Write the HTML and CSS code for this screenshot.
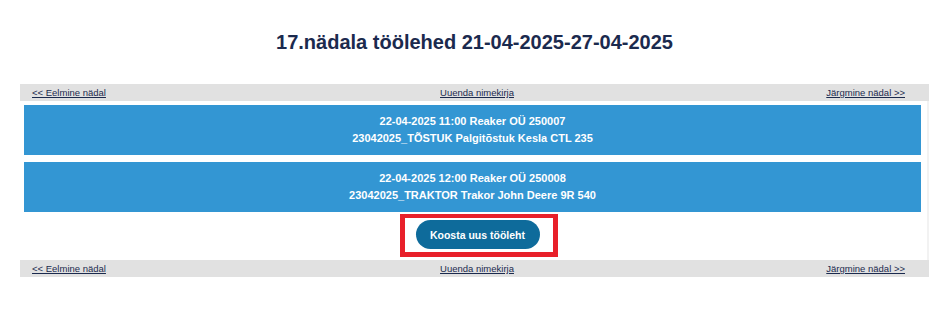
FILE: index.html
```html
<!DOCTYPE html>
<html lang="et">
<head>
    <meta charset="UTF-8">
    <meta name="viewport" content="width=device-width, initial-scale=1.0">
    <title>Töölehed</title>
    <link rel="stylesheet" href="styles.css">
</head>
<body>
    <h1>17.nädala töölehed 21-04-2025-27-04-2025</h1>

    <div class="container">
        <div class="nav-bar">
            <a href="#" class="prev">&lt;&lt; Eelmine nädal</a>
            <a href="#">Uuenda nimekirja</a>
            <a href="#" class="next">Järgmine nädal &gt;&gt;</a>
        </div>

        <div class="sheets">
            <div class="sheet">
                <div>22-04-2025 11:00 Reaker OÜ 250007</div>
                <div>23042025_TÕSTUK Palgitõstuk Kesla CTL 235</div>
            </div>
            <div class="sheet">
                <div>22-04-2025 12:00 Reaker OÜ 250008</div>
                <div>23042025_TRAKTOR Trakor John Deere 9R 540</div>
            </div>

            <div class="button-container">
                <div class="highlight">
                    <button>Koosta uus tööleht</button>
                </div>
            </div>
        </div>

        <div class="nav-bar">
            <a href="#" class="prev">&lt;&lt; Eelmine nädal</a>
            <a href="#">Uuenda nimekirja</a>
            <a href="#" class="next">Järgmine nädal &gt;&gt;</a>
        </div>
    </div>
</body>
</html>
```

FILE: styles.css
```css
:root {
    --blue: #3396d3;
    --button: #0e6b9b;
    --navy: #1b2a4e;
    --bar: #e1e1e1;
}

* {
    box-sizing: border-box;
    margin: 0;
    padding: 0;
}

body {
    font-family: 'Liberation Sans', Arial, sans-serif;
    background: #fff;
    color: var(--navy);
    padding: 0 12px 0 20px;
}

h1 {
    font-size: 20px;
    font-weight: bold;
    text-align: center;
    color: var(--navy);
    padding-top: 30px;
    line-height: 24px;
    margin-bottom: 30px;
}

.container {
    width: 909px;
}

.nav-bar {
    display: grid;
    grid-template-columns: 1fr auto 1fr;
    align-items: center;
    background: var(--bar);
    height: 17px;
    padding: 0 7px 0 12px;
    font-size: 9.5px;
}

.nav-bar a {
    color: var(--navy);
    text-decoration: underline;
}

.nav-bar .prev {
    justify-self: start;
}

.nav-bar .next {
    justify-self: end;
    margin-right: 17px;
}

.sheets {
    padding: 4px 6px 3px 4px;
    border-right: 2px solid #f2f2f2;
    display: flex;
    flex-direction: column;
    gap: 7px;
}

.sheet {
    background: var(--blue);
    color: #fff;
    font-weight: bold;
    font-size: 11px;
    line-height: 17px;
    text-align: center;
    height: 50px;
    padding-top: 8px;
}

.button-container {
    display: flex;
    justify-content: center;
    margin-top: -5px;
    padding-left: 12px;
}

.highlight {
    border: 5px solid #e8202a;
    border-top-width: 4px;
    padding: 2px 13px 3px 11px;
}

button {
    background: var(--button);
    color: #fff;
    border: none;
    border-radius: 15px;
    width: 124px;
    height: 29px;
    font-family: 'Liberation Sans', Arial, sans-serif;
    font-size: 10.5px;
    font-weight: bold;
    cursor: pointer;
}
```
